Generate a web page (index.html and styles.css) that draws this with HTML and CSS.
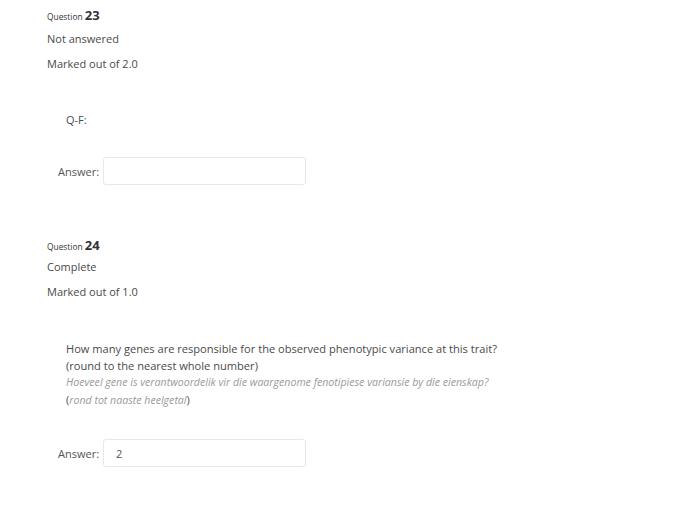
FILE: index.html
```html
<!DOCTYPE html>
<html>
<head>
<meta charset="utf-8">
<link rel="stylesheet" href="styles.css">
</head>
<body>
<div class="que">
  <div class="info">
    <h3 class="qno">Question <span class="num">23</span></h3>
    <div class="state">Not answered</div>
    <div class="grade">Marked out of 2.0</div>
  </div>
  <div class="content">
    <div class="qtext qf">Q-F:</div>
    <div class="ablock">
      <label class="alabel">Answer:</label>
      <span class="abox"></span>
    </div>
  </div>
</div>
<div class="que que2">
  <div class="info">
    <h3 class="qno">Question <span class="num">24</span></h3>
    <div class="state">Complete</div>
    <div class="grade">Marked out of 1.0</div>
  </div>
  <div class="content">
    <div class="qtext">
      <p class="line">How many genes are responsible for the observed phenotypic variance at this trait?</p>
      <p class="line">(round to the nearest whole number)</p>
      <p class="line af">Hoeveel gene is verantwoordelik vir die waargenome fenotipiese variansie by die eienskap?</p>
      <p class="line"><span class="paren">(</span><span class="af">rond tot naaste heelgetal</span><span class="paren">)</span></p>
    </div>
    <div class="ablock ablock2">
      <label class="alabel">Answer:</label>
      <span class="abox">2</span>
    </div>
  </div>
</div>
</body>
</html>
```

FILE: styles.css
```css
html, body {
  margin: 0;
  padding: 0;
  background: #ffffff;
}
body {
  font-family: "Open Sans", "Liberation Sans", sans-serif;
  color: #4a4a4a;
  font-size: 11px;
  width: 700px;
  height: 507px;
  overflow: hidden;
}
.que {
  padding: 8px 0 0 47px;
}
.que2 {
  padding-top: 53px;
}
.info {
  display: flex;
  flex-direction: column;
}
.qno {
  margin: 0;
  font-size: 8.4px;
  font-weight: 400;
  color: #333;
  line-height: 14px;
  height: 14px;
}
.num {
  font-size: 13px;
  font-weight: 700;
  color: #333;
}
.state {
  margin-top: 9px;
  line-height: 16px;
}
.que2 .state {
  margin-top: 7px;
}
.grade {
  margin-top: 9px;
  line-height: 16px;
}
.content {
  padding-left: 11px;
}
.qtext {
  padding-left: 8px;
  margin-top: 40px;
}
.qf {
  line-height: 16px;
}
.line {
  margin: 0;
  line-height: 17px;
  font-size: 11.1px;
}
.af {
  font-style: italic;
  color: #9a9a9a;
  font-size: 10.6px;
}
.paren {
  color: #555;
}
.ablock {
  display: flex;
  align-items: center;
  gap: 4px;
  margin-top: 29px;
}
.ablock2 {
  margin-top: 30px;
}
.alabel {
  font-size: 11px;
  color: #555;
}
.abox {
  box-sizing: border-box;
  width: 203px;
  height: 28px;
  border: 1px solid #e8e8e8;
  border-radius: 3px;
  padding: 0 12px;
  display: flex;
  align-items: center;
  font-size: 11px;
  color: #555;
}
```
